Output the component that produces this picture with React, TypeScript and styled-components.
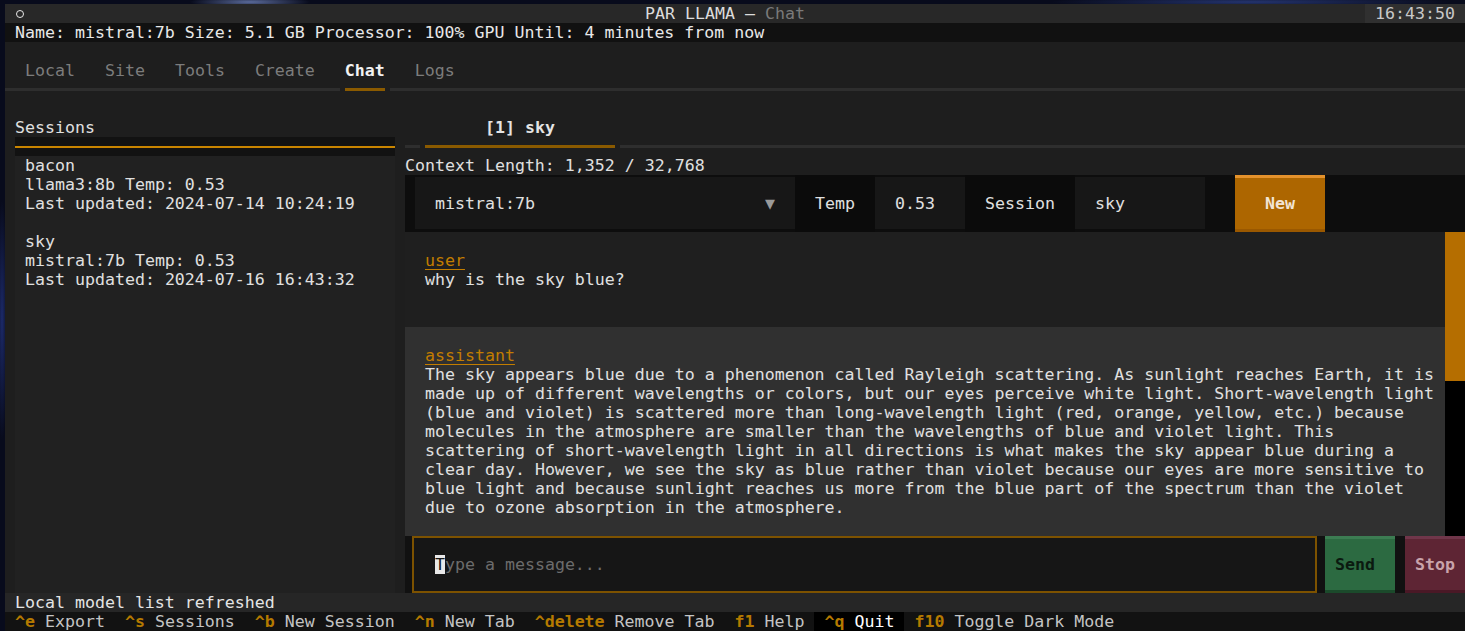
import styled, { createGlobalStyle } from "styled-components";

const orange = "#b56e00";
const dimOrange = "#8a5a00";
const text = "#e0e0e0";

const GlobalStyle = createGlobalStyle`
  html, body {
    margin: 0;
    padding: 0;
  }
  body {
    width: 1465px;
    height: 631px;
    overflow: hidden;
    background:
      radial-gradient(ellipse 60px 6px at 250px 2px, #5a6a9a, transparent),
      radial-gradient(ellipse 200px 6px at 1250px 2px, #24346e, transparent),
      radial-gradient(ellipse 6px 120px at 2px 320px, #1c2a6a, transparent),
      #080b1c;
    font-family: "DejaVu Sans Mono", "Liberation Mono", monospace;
    font-size: 16.6px;
    line-height: 19px;
  }
`;

const Desktop = styled.div`
  padding: 4px 0 0 5px;
  height: 631px;
  box-sizing: border-box;
`;

const Terminal = styled.div`
  width: 1460px;
  height: 627px;
  display: flex;
  flex-direction: column;
  background: #1e1e1e;
  color: ${text};
  white-space: pre;
`;

const Header = styled.div`
  display: flex;
  height: 19px;
  background: #282828;
  color: #dcdcdc;
`;

const HeaderIcon = styled.div`
  width: 80px;
  display: flex;
  align-items: center;
  padding-left: 11px;
  box-sizing: border-box;
`;

const Ring = styled.span`
  width: 8px;
  height: 8px;
  border: 1.6px solid #e8e8e8;
  border-radius: 50%;
  box-sizing: border-box;
`;

const Title = styled.div`
  flex: 1;
  text-align: center;
`;

const Dim = styled.span`
  color: #7a7a7a;
`;

const Clock = styled.div`
  width: 100px;
  padding-left: 10px;
  box-sizing: border-box;
  background: #303030;
  color: #c8c8c8;
`;

const InfoBar = styled.div`
  height: 19px;
  padding-left: 10px;
  background: #111111;
  color: #e8e8e8;
`;

const TabBar = styled.div`
  padding-top: 19px;
`;

const TabRow = styled.div<{ $indent: number }>`
  display: flex;
  height: 19px;
  padding-left: ${(p) => p.$indent}px;
`;

const Tab = styled.div<{ $active?: boolean }>`
  padding: 0 10px;
  margin-right: 10px;
  color: ${(p) => (p.$active ? "#f2f2f2" : "#7c7c7c")};
  font-weight: ${(p) => (p.$active ? "bold" : "normal")};
`;

const UnderlineRow = styled.div`
  height: 19px;
  display: flex;
  align-items: center;
  gap: 5px;
`;

const Bar = styled.div<{ $width?: number; $active?: boolean }>`
  height: 3px;
  ${(p) => (p.$width !== undefined ? `width: ${p.$width}px;` : "flex: 1;")}
  background: ${(p) => (p.$active ? dimOrange : "#2e2e2e")};
`;

function Underline({ before, width }: { before: number; width: number }) {
  return (
    <UnderlineRow>
      <Bar $width={before} />
      <Bar $width={width} $active />
      <Bar />
    </UnderlineRow>
  );
}

const Main = styled.div`
  flex: 1;
  display: flex;
  min-height: 0;
`;

const LeftPanel = styled.div`
  width: 400px;
  padding: 19px 10px 0 10px;
  box-sizing: border-box;
  display: flex;
  flex-direction: column;
`;

const Line = styled.div`
  height: 19px;
`;

const Rule = styled.div`
  height: 19px;
  background: #121212;
  display: flex;
  align-items: center;
  &::after {
    content: "";
    flex: 1;
    height: 2px;
    background: #c98500;
  }
`;

const SessionList = styled.div`
  flex: 1;
  background: #212121;
  padding: 0 10px;
`;

const SessionItem = styled.div`
  margin-bottom: 19px;
`;

const RightPanel = styled.div`
  width: 1060px;
  display: flex;
  flex-direction: column;
`;

const ChatTab = styled.div`
  height: 19px;
  margin-top: 19px;
  padding-left: 80px;
  font-weight: bold;
  color: #e4e4e4;
`;

const Controls = styled.div`
  height: 57px;
  display: flex;
  background: #0d0d0d;
`;

const Field = styled.div<{ $width: number }>`
  width: ${(p) => p.$width}px;
  margin: 2px 0 3px;
  padding: 0 20px;
  box-sizing: border-box;
  background: #171717;
  display: flex;
  align-items: center;
  justify-content: space-between;
`;

const Arrow = styled.span`
  color: #9a9a9a;
`;

const FieldLabel = styled.div`
  padding: 0 20px;
  display: flex;
  align-items: center;
  background: #0b0b0b;
`;

const NewButton = styled.div`
  width: 90px;
  margin-left: 30px;
  box-sizing: border-box;
  background: #ad6600;
  border-top: 3px solid #e4922c;
  border-bottom: 3px solid #9a5800;
  display: flex;
  align-items: center;
  justify-content: center;
  color: #f2e4d4;
  font-weight: bold;
`;

const Messages = styled.div`
  flex: 1;
  display: flex;
  min-height: 0;
`;

const MessageList = styled.div`
  flex: 1;
  min-width: 0;
  overflow: hidden;
  display: flex;
  flex-direction: column;
`;

const Message = styled.div<{ $assistant?: boolean }>`
  padding: 19px 0 ${(p) => (p.$assistant ? 19 : 38)}px 20px;
  background: ${(p) => (p.$assistant ? "#303030" : "#1f1f1f")};
`;

const Role = styled.span`
  color: #c27d00;
  text-decoration: underline;
  text-underline-offset: 3px;
`;

const Scrollbar = styled.div`
  width: 20px;
  flex-shrink: 0;
  background: #000;
  display: flex;
  flex-direction: column;
  &::before {
    content: "";
    height: 149px;
    background: ${orange};
  }
`;

const InputRow = styled.div`
  height: 57px;
  display: flex;
  padding-left: 7px;
  background: #111111;
`;

const InputBox = styled.div`
  width: 905px;
  box-sizing: border-box;
  border: 2px solid #7d5200;
  background: #161616;
  padding-left: 21px;
  display: flex;
  align-items: center;
  color: #6c6c6c;
`;

const Cursor = styled.span`
  background: #e8e8e8;
  color: #161616;
`;

const ActionButton = styled.div<{ $bg: string; $top: string; $bottom: string; $color: string; $width: number; $gap: number }>`
  width: ${(p) => p.$width}px;
  margin-left: ${(p) => p.$gap}px;
  box-sizing: border-box;
  padding-left: 10px;
  background: ${(p) => p.$bg};
  border-top: 3px solid ${(p) => p.$top};
  border-bottom: 3px solid ${(p) => p.$bottom};
  color: ${(p) => p.$color};
  font-weight: bold;
  display: flex;
  align-items: center;
`;

const Status = styled.div`
  height: 19px;
  padding-left: 10px;
  background: #262626;
  color: #e4e4e4;
`;

const Footer = styled.div`
  height: 19px;
  display: flex;
  background: #121212;
`;

const FooterItem = styled.div<{ $hot?: boolean }>`
  padding: 0 10px;
  background: ${(p) => (p.$hot ? "#000" : "transparent")};
  color: ${(p) => (p.$hot ? "#ffffff" : "#c4c4c4")};
`;

const Key = styled.span`
  color: #b57a00;
  font-weight: bold;
`;

const sessions = [
  { name: "bacon", model: "llama3:8b", updated: "2024-07-14 10:24:19" },
  { name: "sky", model: "mistral:7b", updated: "2024-07-16 16:43:32" },
];

const answer = [
  "The sky appears blue due to a phenomenon called Rayleigh scattering. As sunlight reaches Earth, it is",
  "made up of different wavelengths or colors, but our eyes perceive white light. Short-wavelength light",
  "(blue and violet) is scattered more than long-wavelength light (red, orange, yellow, etc.) because",
  "molecules in the atmosphere are smaller than the wavelengths of blue and violet light. This",
  "scattering of short-wavelength light in all directions is what makes the sky appear blue during a",
  "clear day. However, we see the sky as blue rather than violet because our eyes are more sensitive to",
  "blue light and because sunlight reaches us more from the blue part of the spectrum than the violet",
  "due to ozone absorption in the atmosphere.",
];

const bindings = [
  ["^e", "Export"],
  ["^s", "Sessions"],
  ["^b", "New Session"],
  ["^n", "New Tab"],
  ["^delete", "Remove Tab"],
  ["f1", "Help"],
  ["^q", "Quit"],
  ["f10", "Toggle Dark Mode"],
];

const tabs = ["Local", "Site", "Tools", "Create", "Chat", "Logs"];

export default function App() {
  return (
    <>
      <GlobalStyle />
      <Desktop>
        <Terminal>
          <Header>
            <HeaderIcon>
              <Ring />
            </HeaderIcon>
            <Title>
              PAR LLAMA — <Dim>Chat</Dim>
            </Title>
            <Clock>16:43:50</Clock>
          </Header>
          <InfoBar>Name: mistral:7b Size: 5.1 GB Processor: 100% GPU Until: 4 minutes from now</InfoBar>

          <TabBar>
            <TabRow $indent={10}>
              {tabs.map((t) => (
                <Tab key={t} $active={t === "Chat"}>
                  {t}
                </Tab>
              ))}
            </TabRow>
            <Underline before={335} width={40} />
          </TabBar>

          <Main>
            <LeftPanel>
              <Line>Sessions</Line>
              <Rule />
              <SessionList>
                {sessions.map((s) => (
                  <SessionItem key={s.name}>
                    <Line>{s.name}</Line>
                    <Line>{s.model} Temp: 0.53</Line>
                    <Line>Last updated: {s.updated}</Line>
                  </SessionItem>
                ))}
              </SessionList>
            </LeftPanel>

            <RightPanel>
              <ChatTab>[1] sky</ChatTab>
              <Underline before={15} width={190} />
              <Line>Context Length: 1,352 / 32,768</Line>
              <Controls>
                <Field $width={380} style={{ marginLeft: 10 }}>
                  mistral:7b
                  <Arrow>▼</Arrow>
                </Field>
                <FieldLabel>Temp</FieldLabel>
                <Field $width={90}>0.53</Field>
                <FieldLabel>Session</FieldLabel>
                <Field $width={130}>sky</Field>
                <NewButton>New</NewButton>
              </Controls>

              <Messages>
                <MessageList>
                  <Message>
                    <Line>
                      <Role>user</Role>
                    </Line>
                    <Line>why is the sky blue?</Line>
                  </Message>
                  <Message $assistant>
                    <Line>
                      <Role>assistant</Role>
                    </Line>
                    {answer.map((l) => (
                      <Line key={l}>{l}</Line>
                    ))}
                  </Message>
                </MessageList>
                <Scrollbar />
              </Messages>

              <InputRow>
                <InputBox>
                  <Cursor>T</Cursor>ype a message...
                </InputBox>
                <ActionButton $width={70} $gap={8} $bg="#2c6a41" $top="#3c7c52" $bottom="#1b4a2b" $color="#0b1a10">
                  Send
                </ActionButton>
                <ActionButton $width={60} $gap={10} $bg="#5e2534" $top="#70364a" $bottom="#4a1826" $color="#c9a3ab">
                  Stop
                </ActionButton>
              </InputRow>
            </RightPanel>
          </Main>

          <Status>Local model list refreshed</Status>
          <Footer>
            {bindings.map(([k, d]) => (
              <FooterItem key={k} $hot={k === "^q"}>
                <Key>{k}</Key> {d}
              </FooterItem>
            ))}
          </Footer>
        </Terminal>
      </Desktop>
    </>
  );
}
